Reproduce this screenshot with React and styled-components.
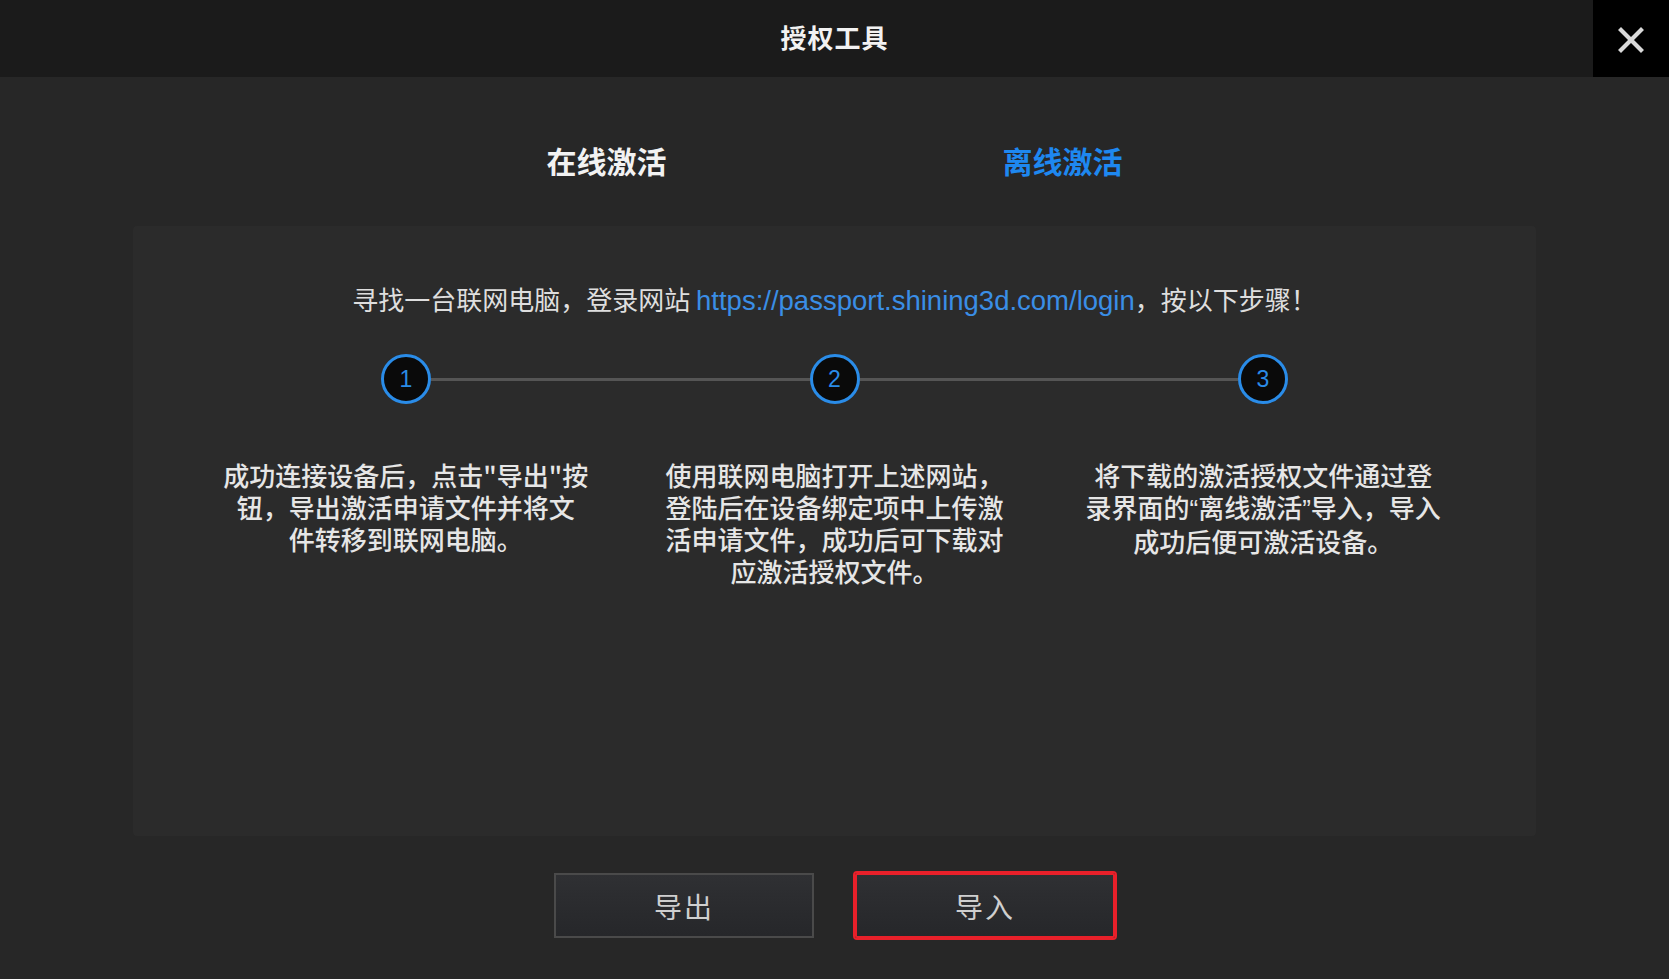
import React from 'react';
import styled, { createGlobalStyle } from 'styled-components';

const App = () => {
  const steps = [
    ['成功连接设备后，点击"导出"按', '钮，导出激活申请文件并将文', '件转移到联网电脑。'],
    ['使用联网电脑打开上述网站，', '登陆后在设备绑定项中上传激', '活申请文件，成功后可下载对', '应激活授权文件。'],
    ['将下载的激活授权文件通过登', <>录界面的<Quote>“</Quote>离线激活<Quote>”</Quote>导入，导入</>, '成功后便可激活设备。'],
  ];

  return (
    <Wrapper>
      <GlobalStyle />
      <Header>
        <Title>授权工具</Title>
        <CloseButton aria-label="close">
          <svg width="26" height="26" viewBox="0 0 26 26">
            <path d="M3 3 L23 23 M23 3 L3 23" stroke="#d9d9d9" strokeWidth="4.2" strokeLinecap="square" />
          </svg>
        </CloseButton>
      </Header>
      <Tabs>
        <Tab>在线激活</Tab>
        <Tab $active>离线激活</Tab>
      </Tabs>
      <Panel>
        <Intro>
          寻找一台联网电脑，登录网站 <Link>https://passport.shining3d.com/login</Link>，按以下步骤！
        </Intro>
        <Track>
          {steps.map((_, index) => (
            <React.Fragment key={index}>
              {index > 0 ? <TrackLine /> : null}
              <StepCircle>{index + 1}</StepCircle>
            </React.Fragment>
          ))}
        </Track>
        <StepTexts>
          {steps.map((lines, index) => (
            <StepText key={index}>
              {lines.map((line, i) => (
                <div key={i}>{line}</div>
              ))}
            </StepText>
          ))}
        </StepTexts>
      </Panel>
      <Actions>
        <Button>导出</Button>
        <Button $highlighted>导入</Button>
      </Actions>
    </Wrapper>
  );
};

const GlobalStyle = createGlobalStyle`
  html, body {
    margin: 0;
    padding: 0;
    background: #272727;
  }

  body {
    font-family: "Noto Sans CJK SC", "Noto Sans", "Liberation Sans", sans-serif;
  }
`;

const Wrapper = styled.div`
  width: 100%;
  height: 979px;
  display: flex;
  flex-direction: column;
  background: #272727;
  overflow: hidden;
`;

const Header = styled.div`
  position: relative;
  height: 77px;
  flex-shrink: 0;
  display: flex;
  align-items: center;
  justify-content: center;
  padding-bottom: 4px;
  box-sizing: border-box;
  background: #1b1b1b;
`;

const Title = styled.div`
  font-size: 26px;
  font-weight: 700;
  color: #f2f2f2;
  letter-spacing: 1px;
`;

const CloseButton = styled.div`
  position: absolute;
  top: 0;
  right: 0;
  width: 76px;
  height: 77px;
  display: flex;
  align-items: center;
  justify-content: center;
  background: #000;
  padding-top: 3px;
  box-sizing: border-box;
`;

const Tabs = styled.div`
  display: flex;
  justify-content: center;
  gap: 336px;
  padding: 63px 0 46px;
`;

const Tab = styled.div`
  width: 120px;
  text-align: center;
  font-size: 30px;
  line-height: 40px;
  font-weight: 700;
  white-space: nowrap;
  color: ${props => (props.$active ? '#1e88f0' : '#f2f2f2')};
`;

const Panel = styled.div`
  height: 610px;
  margin: 0 133px;
  padding-top: 56px;
  box-sizing: border-box;
  background: #2b2b2b;
  border-radius: 4px;
  display: flex;
  flex-direction: column;
  align-items: center;
`;

const Intro = styled.div`
  font-size: 26px;
  line-height: 34px;
  color: #dedede;
  white-space: nowrap;
`;

const Link = styled.span`
  font-family: "Liberation Sans", Arial, sans-serif;
  font-size: 27.5px;
  color: #3a8ee6;
`;

const Quote = styled.span`
  font-family: "Liberation Sans", Arial, sans-serif;
`;

const Track = styled.div`
  width: 907px;
  margin-top: 36px;
  display: flex;
  align-items: center;
`;

const TrackLine = styled.div`
  flex: 1;
  height: 3px;
  background: #555;
`;

const StepCircle = styled.div`
  width: 50px;
  height: 50px;
  box-sizing: border-box;
  border: 3px solid #2a8ce8;
  border-radius: 50%;
  background: #0a0a0a;
  display: flex;
  align-items: center;
  justify-content: center;
  font-family: "Liberation Sans", Arial, sans-serif;
  font-size: 23px;
  color: #2a8ce8;
`;

const StepTexts = styled.div`
  width: 1286px;
  margin-top: 55px;
  display: grid;
  grid-template-columns: repeat(3, 1fr);
`;

const StepText = styled.div`
  text-align: center;
  font-size: 26px;
  line-height: 32px;
  font-weight: 500;
  color: #e6e6e6;
  white-space: nowrap;
`;

const Actions = styled.div`
  display: flex;
  justify-content: center;
  gap: 41px;
  padding-top: 37px;
`;

const Button = styled.div`
  width: 260px;
  height: 65px;
  box-sizing: border-box;
  display: flex;
  align-items: center;
  justify-content: center;
  font-size: 28px;
  letter-spacing: 2px;
  color: #cfcfcf;
  background: linear-gradient(#2f3033, #26272a);
  border: 2px solid ${props => (props.$highlighted ? '#e8202a' : '#4a4a4a')};
  outline: ${props => (props.$highlighted ? '2px solid #e8202a' : 'none')};
  border-radius: ${props => (props.$highlighted ? '2px' : '0')};
`;

export default App;
